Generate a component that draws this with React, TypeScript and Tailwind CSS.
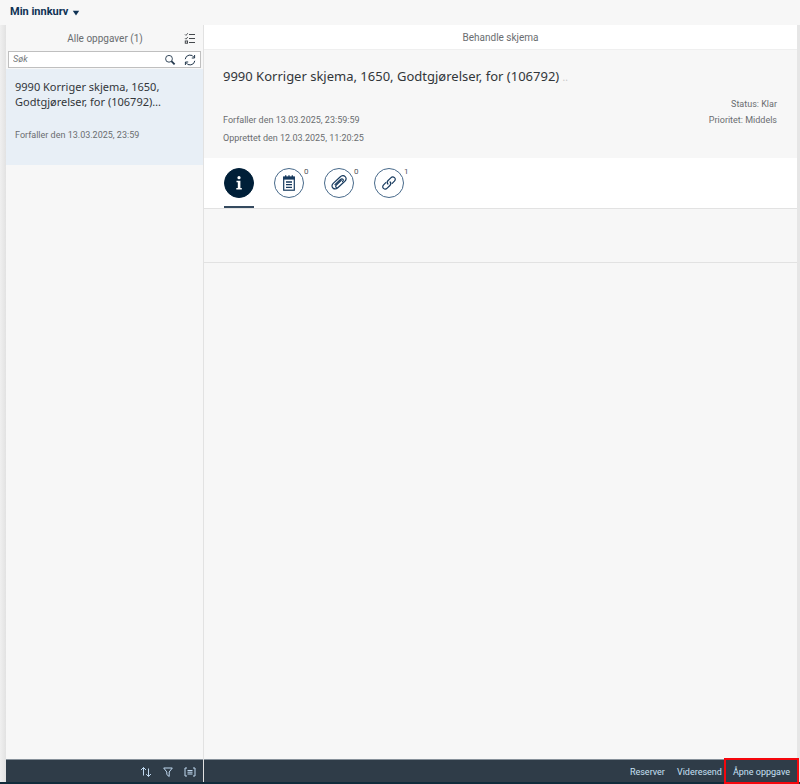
import React, { useState } from 'react';

interface Task {
  id: number;
  title: string;
  due: string;
}

interface IconProps {
  className?: string;
}

const tasks: Task[] = [
  {
    id: 1,
    title: '9990 Korriger skjema, 1650, Godtgjørelser, for (106792)…',
    due: 'Forfaller den 13.03.2025, 23:59',
  },
];

const ChecklistIcon = ({ className }: IconProps) => (
  <svg viewBox="0 0 12 12" className={className} fill="none" stroke="currentColor">
    <path d="M5 2.5h6M5 6.5h6M5 10.5h6" strokeWidth="1" />
    <path d="M1 2.4l1 1 1.8-2.2M1 6.2l1 1 1.8-2.2" strokeWidth="0.9" />
    <rect x="1.3" y="9" width="2.2" height="2.2" strokeWidth="1" />
  </svg>
);

const SearchIcon = ({ className }: IconProps) => (
  <svg viewBox="0 0 12 12" className={className} fill="none" stroke="currentColor">
    <circle cx="5" cy="4.8" r="3.4" strokeWidth="0.9" />
    <path d="M7.4 7.2l3.2 3.2" strokeWidth="1.8" />
  </svg>
);

const RefreshIcon = ({ className }: IconProps) => (
  <svg viewBox="0 0 12 12" className={className} fill="none" stroke="currentColor" strokeWidth="1">
    <path d="M1.2 5.2A4.8 4.8 0 0 1 10.2 3.6M10.8 6.8A4.8 4.8 0 0 1 1.8 8.4" />
    <path d="M10.6 1v3H7.8M1.4 11V8h2.8" />
  </svg>
);

const NotesIcon = ({ className }: IconProps) => (
  <svg viewBox="0 0 16 16" className={className} fill="none" stroke="currentColor">
    <rect x="2.7" y="2.2" width="10.6" height="13" strokeWidth="1.2" />
    <path d="M2.2 1.6h11.6v3H2.2z" fill="currentColor" stroke="none" />
    <path d="M4.7 0.3v2M8 0.3v2M11.3 0.3v2" strokeWidth="1.3" />
    <path d="M5 7h6M5 9.7h6M5 12.4h6" strokeWidth="1.3" />
  </svg>
);

const ClipIcon = ({ className }: IconProps) => (
  <svg viewBox="0 0 16 16" className={className} fill="none" stroke="currentColor" strokeWidth="1.2" strokeLinecap="round">
    <path d="M12.2 7.6l-5.4 5.1c-1.5 1.4-3.6 1.5-4.9.3s-1.2-3.2.3-4.6l6.6-6.2c1.7-1.6 4-1.9 5.4-.6s1.2 3.3-.4 4.8l-5.9 5.5c-1 .9-2.1 1.1-2.8.4s-.5-1.7.5-2.6l4.7-4.4" />
    <path d="M4 9.6l5.2-4.9c1-.9 2-1.1 2.7-.5s.5 1.6-.4 2.5" />
  </svg>
);

const LinkIcon = ({ className }: IconProps) => (
  <svg viewBox="0 0 16 16" className={className} fill="none" stroke="currentColor" strokeWidth="1.2" strokeLinecap="round">
    <path d="M6.9 9C5.9 7.9 6.1 6.5 7.1 5.5l2.7-2.7c1.2-1.2 2.6-1.2 3.7-.2s1 2.4-.1 3.6L11.2 8.4" />
    <path d="M9.1 7c1 1.100.8 2.500-.2 3.500l-2.700 2.700c-1.200 1.200-2.600 1.200-3.700.2s-1-2.400.1-3.600L4.800 7.600" />
  </svg>
);

const SortIcon = ({ className }: IconProps) => (
  <svg viewBox="0 0 12 12" className={className} fill="none" stroke="currentColor" strokeWidth="1">
    <path d="M3.5 9.5v-8M1 4l2.5-2.5L6 4M8.5 2.5v8M6.2 8.2l2.3 2.3L11 8" />
  </svg>
);

const FilterIcon = ({ className }: IconProps) => (
  <svg viewBox="0 0 12 12" className={className} fill="none" stroke="currentColor" strokeWidth="1">
    <path d="M1.7 2h8.6L7.2 6v4.5L4.8 8.5V6z" />
  </svg>
);

const GroupIcon = ({ className }: IconProps) => (
  <svg viewBox="0 0 12 12" className={className} fill="none" stroke="currentColor" strokeWidth="1">
    <path d="M3 2H1v8h2M9 2h2v8H9M3.5 4.5h5M3.5 6.2h5M3.5 8h5" />
  </svg>
);

const InfoIcon = ({ className }: IconProps) => (
  <svg viewBox="0 0 16 16" className={className} fill="currentColor">
    <circle cx="8" cy="2.7" r="1.6" />
    <path d="M5.5 5.8h3.9v7.2h1.4v1.5H5.3V13h1.500V7.300H5.500z" />
  </svg>
);

const tabs = [
  { key: 'info', label: 'Informasjon', count: '' },
  { key: 'notes', label: 'Kommentarer', count: '0' },
  { key: 'files', label: 'Vedlegg', count: '0' },
  { key: 'links', label: 'Koblinger', count: '1' },
];

const TabIcon = ({ name }: { name: string }) => {
  if (name === 'notes') return <NotesIcon className="size-4" />;
  if (name === 'files') return <ClipIcon className="size-4" />;
  if (name === 'links') return <LinkIcon className="size-4" />;
  return <InfoIcon className="size-4" />;
};

const TaskList = () => {
  const [query, setQuery] = useState('');
  const visible = tasks.filter(t => t.title.toLowerCase().includes(query.toLowerCase()));

  return (
    <aside className="flex w-1/4 max-w-[198px] shrink-0 flex-col border-r border-[#e2e2e2]">
      <div className="flex h-[26px] items-center pr-[7px] pl-5">
        <h2 className="flex-1 text-center text-[10px] text-[#6a6d70]">Alle oppgaver (1)</h2>
        <button type="button" aria-label="Velg flere"><ChecklistIcon className="size-3 text-[#45494d]" /></button>
      </div>
      <div className="mx-0.5 mb-px flex h-[17px] items-center gap-2 border border-[#bfbfbf] bg-white px-1">
        <input
          type="search"
          aria-label="Søk"
          placeholder="Søk"
          value={query}
          onChange={e => setQuery(e.target.value)}
          className="w-0 min-w-0 flex-1 text-[9px] text-[#32363a] outline-none placeholder:text-[#74777a] placeholder:italic"
        />
        <button type="button" aria-label="Utfør søk"><SearchIcon className="size-3 text-[#23384d]" /></button>
        <button type="button" aria-label="Oppdater"><RefreshIcon className="size-3 text-[#23384d]" /></button>
      </div>
      <ul className="flex-1">
        {visible.map(t => (
          <li key={t.id}>
            <button type="button" className="flex h-24 w-full flex-col bg-[#e8eff6] px-[9px] pt-2.5 text-left">
              <span className="pr-4 font-['Noto_Sans',sans-serif] text-[11px] leading-[15px] text-[#32363a]">{t.title}</span>
              <span className="mt-[18px] text-[9px] leading-4 text-[#6a6d70]">{t.due}</span>
            </button>
          </li>
        ))}
      </ul>
      <div className="flex h-[23px] items-center justify-end gap-2.5 border-t border-[#87919a] bg-[#2f3c48] pt-0.5 pr-[7px] text-[#c0d8ef]">
        <button type="button" aria-label="Sorter"><SortIcon className="size-3" /></button>
        <button type="button" aria-label="Filtrer"><FilterIcon className="size-3" /></button>
        <button type="button" aria-label="Grupper"><GroupIcon className="size-3" /></button>
      </div>
    </aside>
  );
};

const TaskDetail = () => {
  const [active, setActive] = useState('info');

  return (
    <main className="flex min-w-0 flex-1 flex-col">
      <h2 className="h-[25px] border-b border-[#efefef] bg-white text-center text-[10px] leading-[25px] text-[#6a6d70]">Behandle skjema</h2>
      <header className="h-[108px] pt-4 pr-5 pl-[19px]">
        <h1 className="font-['Noto_Sans',sans-serif] text-[13px] leading-5 text-[#32363a]">
          9990 Korriger skjema, 1650, Godtgjørelser, for (106792) <span className="text-[10px] text-[#c8c8c8]">..</span>
        </h1>
        <div className="flex justify-between text-[9px] leading-4 text-[#6a6d70]">
          <div className="space-y-0.5 pt-[25px]">
            <p>Forfaller den 13.03.2025, 23:59:59</p>
            <p>Opprettet den 12.03.2025, 11:20:25</p>
          </div>
          <div className="pt-[9px] text-right">
            <p>Status: Klar</p>
            <p>Prioritet: Middels</p>
          </div>
        </div>
      </header>
      <div role="tablist" className="flex gap-5 border-b border-[#e2e2e2] bg-white px-5">
        {tabs.map(tab => (
          <button
            key={tab.key}
            type="button"
            role="tab"
            aria-label={tab.label}
            aria-selected={active === tab.key}
            onClick={() => setActive(tab.key)}
            className={`relative border-b-2 pt-2.5 pb-2 ${active === tab.key ? 'border-[#354a5f]' : 'border-transparent'}`}
          >
            <span
              className={`flex size-[30px] items-center justify-center rounded-full border ${
                active === tab.key ? 'border-[#001f38] bg-[#001f38] text-white' : 'border-[#47698a] text-[#173a5e]'
              }`}
            >
              <TabIcon name={tab.key} />
            </span>
            <span className="absolute top-2.5 left-full text-[8px] leading-2 text-[#51555a]">{tab.count}</span>
          </button>
        ))}
      </div>
      <section className="h-[54px] border-b border-[#e2e2e2]" />
      <div className="flex-1" />
      <footer className="flex h-[23px] items-stretch justify-end gap-3 border-t border-[#87919a] bg-[#2f3c48] text-[9px] text-[#c9e0f5]">
        <button type="button" className="pt-[3px]">Reserver</button>
        <button type="button" className="pt-[3px]">Videresend</button>
        <button type="button" className="relative z-10 -ml-2 px-[7px] pt-[3px] outline-2 outline-[#f5070d]">Åpne oppgave</button>
      </footer>
    </main>
  );
};

const App: React.FC = () => (
  <div className="flex min-h-screen flex-col bg-[#f7f7f7] font-['Roboto',sans-serif]">
    <nav className="flex h-[25px] items-center px-2.5">
      <button type="button" className="flex items-center gap-1 text-[11px] font-bold text-[#0f3254]">
        Min innkurv
        <svg viewBox="0 0 8 8" className="size-2" fill="currentColor"><path d="M0.8 1.8h6.4L4 6.5z" /></svg>
      </button>
    </nav>
    <div className="flex flex-1">
      <div className="w-1.5 bg-linear-to-r from-[#f0f0f0] to-[#e2e2e2]" />
      <TaskList />
      <TaskDetail />
      <div className="w-[3px] bg-[#e6e6e6]" />
    </div>
    <div className="h-0.5 bg-[#102c3b]" />
  </div>
);

export default App;
